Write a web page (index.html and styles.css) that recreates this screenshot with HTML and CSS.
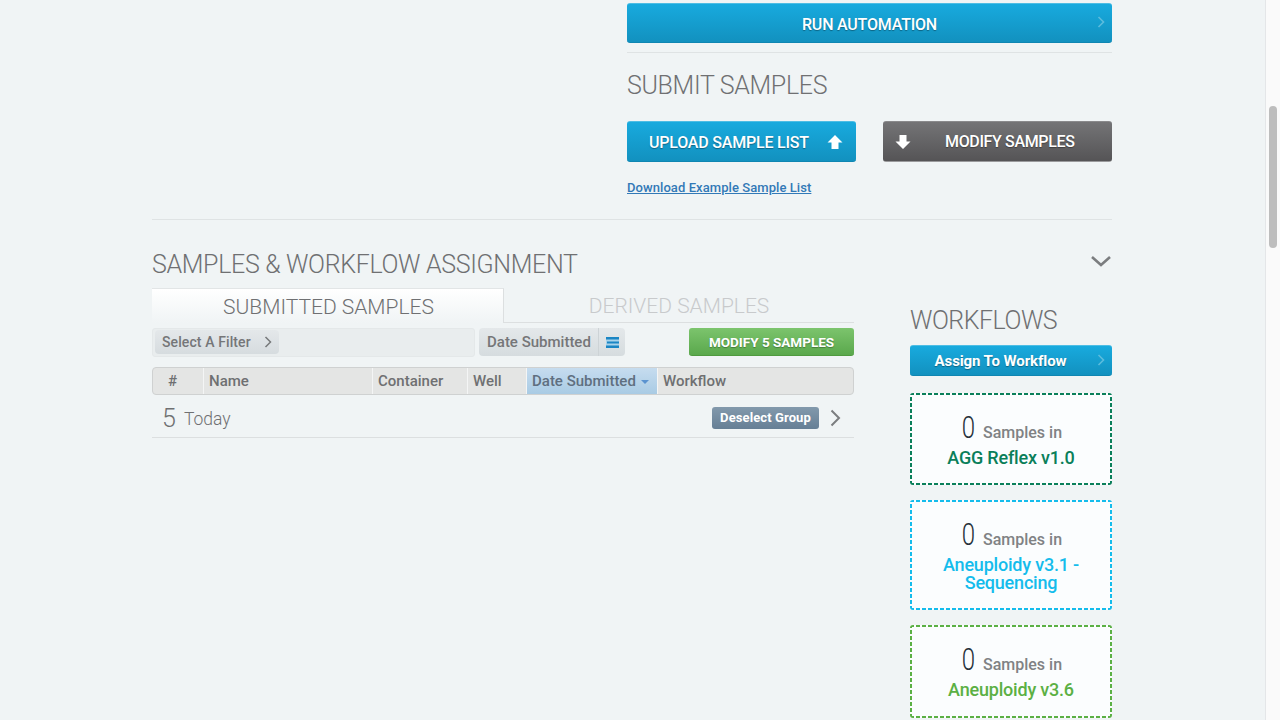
FILE: index.html
```html
<!DOCTYPE html>
<html lang="en">
<head>
  <meta charset="UTF-8">
  <title>Samples</title>
  <link rel="stylesheet" href="styles.css">
</head>
<body>
  <div class="page">
    <div class="content">
      <div class="submit-col">
        <a class="btn btn-blue btn-run">RUN AUTOMATION
          <svg class="btn-chev" width="8" height="12" viewBox="0 0 8 12"><path d="M1.5 1l5 5-5 5" fill="none" stroke="#5cbcdd" stroke-width="1.6"/></svg>
        </a>
        <hr class="rule rule-run">
        <h2 class="heading heading-submit">SUBMIT SAMPLES</h2>
        <div class="submit-btns">
          <a class="btn btn-blue btn-upload">UPLOAD SAMPLE LIST
            <svg class="arrow" width="16" height="16" viewBox="0 0 16 16"><path d="M8 1l7.500 7.500h-4v6.500h-7v-6.500h-4z" fill="#fff"/></svg>
          </a>
          <a class="btn btn-dark btn-modify">
            <svg class="arrow" width="16" height="16" viewBox="0 0 16 16"><path d="M8 15l7.500-7.500h-4v-6.500h-7v6.500h-4z" fill="#fff"/></svg>
            <span>MODIFY SAMPLES</span>
          </a>
        </div>
        <a class="download" href="#">Download Example Sample List</a>
      </div>
      <hr class="rule rule-section">

      <div class="section-head">
        <h2 class="heading">SAMPLES &amp; WORKFLOW ASSIGNMENT</h2>
        <svg width="22" height="13" viewBox="0 0 22 13"><path d="M2 2l9 8 9-8" fill="none" stroke="#7b7d7f" stroke-width="2.600"/></svg>
      </div>

      <div class="columns">
        <div class="samples">
          <div class="tabs">
            <div class="tab tab-active">SUBMITTED SAMPLES</div>
            <div class="tab tab-off">DERIVED SAMPLES</div>
          </div>
          <div class="toolbar">
            <div class="filter-bar">
              <div class="pill pill-filter">Select A Filter
                <svg width="8" height="12" viewBox="0 0 8 12"><path d="M1.500 1l5 5-5 5" fill="none" stroke="#77797b" stroke-width="1.500"/></svg>
              </div>
            </div>
            <div class="pill pill-sort">
              <span class="sort-name">Date Submitted</span>
              <span class="sort-icon">
                <svg width="13" height="11" viewBox="0 0 13 11">
                  <rect width="13" height="11" fill="#a9d3ea"/>
                  <path d="M0 0h13v2.500h-13zM1 4.500h12v2h-12zM0 8.500h13v2.500h-13z" fill="#1b86c4"/>
                </svg>
              </span>
            </div>
            <a class="btn-green">MODIFY 5 SAMPLES</a>
          </div>
          <div class="table-head">
            <div class="col col-num">#</div>
            <div class="col col-name">Name</div>
            <div class="col col-container">Container</div>
            <div class="col col-well">Well</div>
            <div class="col col-date">Date Submitted <i class="caret"></i></div>
            <div class="col col-flow">Workflow</div>
          </div>
          <div class="group-row">
            <span class="group-count">5</span>
            <span class="group-name">Today</span>
            <a class="btn-deselect">Deselect Group</a>
            <svg width="11" height="18" viewBox="0 0 11 18"><path d="M1.500 1.500l7.500 7.500-7.500 7.500" fill="none" stroke="#7b7d7f" stroke-width="2"/></svg>
          </div>
        </div>

        <div class="workflows">
          <h2 class="heading heading-flows">WORKFLOWS</h2>
          <a class="btn btn-blue btn-assign">Assign To Workflow
            <svg class="btn-chev" width="8" height="12" viewBox="0 0 8 12"><path d="M1.500 1l5 5-5 5" fill="none" stroke="#5cbcdd" stroke-width="1.600"/></svg>
          </a>
          <div class="flow-card flow-agg">
            <div class="flow-count"><b>0</b> Samples in</div>
            <div class="flow-name">AGG Reflex v1.0</div>
          </div>
          <div class="flow-card flow-seq">
            <div class="flow-count"><b>0</b> Samples in</div>
            <div class="flow-name">Aneuploidy v3.1 - Sequencing</div>
          </div>
          <div class="flow-card flow-ane">
            <div class="flow-count"><b>0</b> Samples in</div>
            <div class="flow-name">Aneuploidy v3.6</div>
          </div>
        </div>
      </div>
    </div>
    <div class="scrollbar"><div class="scroll-thumb"></div></div>
  </div>
</body>
</html>
```

FILE: styles.css
```css
html, body {
  margin: 0;
  height: 720px;
  overflow: hidden;
}

body {
  font-family: "Roboto", "Liberation Sans", sans-serif;
  background: #f0f4f5;
  color: #6f7072;
}

a {
  text-decoration: none;
}

.page {
  display: flex;
  height: 720px;
  overflow: hidden;
}

.content {
  flex: 1;
  padding: 3px 153px 0 152px;
  min-width: 0;
}

.scrollbar {
  width: 14px;
  border-left: 1px solid #e4e6e8;
  background: #fafafa;
  padding-top: 106px;
}

.scroll-thumb {
  width: 8px;
  height: 142px;
  margin-left: 3px;
  border-radius: 4px;
  background: #bdbdbd;
}

.submit-col {
  margin-left: 475px;
  width: 485px;
}

.heading {
  margin: 0;
  font-size: 25px;
  line-height: 32px;
  font-weight: 300;
  color: #6f7072;
  letter-spacing: -0.33px;
}

.btn {
  display: flex;
  align-items: center;
  justify-content: center;
  box-sizing: border-box;
  padding-top: 1px;
  color: #fff;
  border-radius: 3px;
  font-weight: 500;
  font-size: 16px;
  letter-spacing: -0.2px;
  text-shadow: 0 1px 1px rgba(0, 0, 0, 0.35);
}

.btn-blue {
  background: linear-gradient(#18aade, #1291bf);
  border-top: 1px solid #4dbde4;
  border-bottom: 1px solid #0f86b2;
}

.btn-dark {
  background: linear-gradient(#747476, #555456);
  border-top: 1px solid #8a8a8c;
  border-bottom: 1px solid #9a9a9c;
}

.btn-run {
  position: relative;
  height: 40px;
  padding-top: 3px;
}

.btn-chev {
  position: absolute;
  right: 7px;
  top: 50%;
  margin-top: -7px;
}

.rule {
  border: 0;
  height: 1px;
  margin: 0;
  background: #dfe3e4;
}

.rule-run {
  margin-top: 9px;
}

.heading-submit {
  margin-top: 17px;
}

.submit-btns {
  display: flex;
  justify-content: space-between;
  margin-top: 19px;
}

.btn-upload,
.btn-modify {
  width: 229px;
  height: 41px;
  justify-content: flex-start;
}

.btn-upload {
  gap: 18px;
  padding-left: 22px;
}

.btn-modify {
  padding-top: 0;
  padding-left: 12px;
  letter-spacing: -0.35px;
}

.btn-modify span {
  margin-left: 34px;
}

.download {
  display: block;
  margin-top: 18px;
  font-size: 13px;
  letter-spacing: 0.07px;
  line-height: 16px;
  font-weight: 500;
  color: #3279b7;
  text-decoration: underline;
}

.rule-section {
  margin-top: 23px;
}

.section-head {
  display: flex;
  justify-content: space-between;
  align-items: flex-start;
  margin-top: 29px;
}

.section-head svg {
  margin-top: 6px;
}

.columns {
  display: flex;
  justify-content: space-between;
  margin-top: 7px;
}

.samples {
  width: 702px;
}

.tabs {
  display: flex;
  height: 35px;
}

.tab {
  box-sizing: border-box;
  text-align: center;
  font-size: 21px;
  font-weight: 300;
  line-height: 37px;
}

.tab-active {
  width: 352px;
  padding-left: 2px;
  border-top: 1px solid #e2e5e6;
  border-right: 1px solid #dcdfe0;
  background: linear-gradient(#ffffff, #f0f4f5);
}

.tab-off {
  flex: 1;
  color: #c8cacc;
  border-bottom: 1px solid #dcdfe0;
}

.toolbar {
  display: flex;
  align-items: flex-start;
  margin-top: 5px;
}

.filter-bar {
  box-sizing: border-box;
  width: 323px;
  height: 29px;
  margin-right: 4px;
  padding: 1px 2px;
  background: #e9edee;
  border: 1px solid #e4e8e9;
  border-radius: 3px;
}

.pill {
  display: flex;
  align-items: center;
  font-weight: 500;
  color: #757678;
  background: linear-gradient(#e4e8ea, #d6dcdf);
  border-radius: 4px;
}

.pill-filter {
  width: 124px;
  height: 24px;
  box-sizing: border-box;
  padding: 0 7px;
  justify-content: space-between;
  font-size: 14px;
  letter-spacing: 0.1px;
}

.pill-sort {
  width: 146px;
  height: 28px;
  font-size: 15px;
}

.sort-name {
  flex: 1;
  padding-left: 8px;
}

.sort-icon {
  display: flex;
  align-items: center;
  justify-content: center;
  width: 26px;
  height: 100%;
  border-left: 1px solid #cdd3d6;
}

.btn-green {
  margin-left: auto;
  width: 165px;
  height: 28px;
  box-sizing: border-box;
  border-radius: 3px;
  border-bottom: 1px solid #4f9a3f;
  background: linear-gradient(#7cc46d, #5aa84c);
  color: #fff;
  font-size: 13.5px;
  font-weight: 700;
  line-height: 29px;
  text-align: center;
  text-shadow: 0 1px 1px rgba(0, 0, 0, 0.3);
}

.table-head {
  display: flex;
  box-sizing: border-box;
  height: 28px;
  margin-top: 10px;
  background: #e4e5e4;
  border: 1px solid #cfd1d1;
  border-radius: 4px;
  overflow: hidden;
  font-size: 15px;
  font-weight: 500;
}

.col {
  box-sizing: border-box;
  line-height: 27px;
  padding-left: 5px;
  border-left: 1px solid #f4f5f5;
}

.col-num {
  width: 50px;
  padding-left: 15px;
  border-left: 0;
}

.col-name {
  width: 169px;
}

.col-container {
  width: 95px;
}

.col-well {
  width: 59px;
}

.col-date {
  width: 131px;
  color: #5f6f80;
  background: linear-gradient(#c6dcef, #a9cbe4);
}

.col-flow {
  flex: 1;
}

.caret {
  display: inline-block;
  margin: 0 0 2px 1px;
  border: 4px solid transparent;
  border-top-color: #5b93d0;
  border-bottom: 0;
}

.group-row {
  display: flex;
  align-items: center;
  box-sizing: border-box;
  height: 43px;
  border-bottom: 1px solid #dcdfe0;
  padding: 3px 13px 0 10px;
}

.group-count {
  margin-top: 2px;
  font-size: 25px;
  font-weight: 300;
}

.group-name {
  margin: 2px 0 0 8px;
  flex: 1;
  font-size: 17.5px;
  font-weight: 300;
}

.btn-deselect {
  width: 107px;
  height: 22px;
  margin-right: 11px;
  border-radius: 3px;
  background: linear-gradient(#8299ac, #667f95);
  color: #fff;
  font-size: 13px;
  letter-spacing: 0.1px;
  font-weight: 700;
  line-height: 22px;
  text-align: center;
}

.workflows {
  width: 202px;
  padding-top: 17px;
}

.heading-flows {
  letter-spacing: -0.5px;
}

.btn-assign {
  position: relative;
  height: 31px;
  margin-top: 8px;
  padding-right: 21px;
  font-size: 15px;
  font-weight: 700;
  letter-spacing: -0.1px;
}

.flow-card {
  box-sizing: border-box;
  margin-top: 17px;
  padding: 18px 8px 19px;
  border-radius: 3px;
  background-color: #fbfdfe;
  background-image:
    repeating-linear-gradient(90deg, var(--dash) 0 4px, transparent 4px 6px),
    repeating-linear-gradient(90deg, var(--dash) 0 4px, transparent 4px 6px),
    repeating-linear-gradient(0deg, var(--dash) 0 4px, transparent 4px 6px),
    repeating-linear-gradient(0deg, var(--dash) 0 4px, transparent 4px 6px);
  background-size: 100% 2px, 100% 2px, 2px 100%, 2px 100%;
  background-position: top, bottom, left, right;
  background-repeat: no-repeat;
  text-align: center;
}

.flow-card + .flow-card {
  margin-top: 15px;
}

.flow-count {
  color: #808284;
  font-size: 16px;
  font-weight: 500;
  line-height: 32px;
  height: 32px;
}

.flow-count b {
  display: inline-block;
  width: 14px;
  margin-right: 5px;
  font-size: 32px;
  font-weight: 300;
  color: #26303a;
  transform: scaleX(0.75);
}

.flow-name {
  font-size: 18px;
  line-height: 18px;
  font-weight: 500;
  letter-spacing: -0.2px;
  margin-top: 6px;
}

.flow-agg {
  --dash: #0a7f5a;
  padding-bottom: 18px;
}

.flow-agg .flow-name {
  color: #0a7f5a;
}

.flow-seq {
  --dash: #14bcec;
  padding-bottom: 18px;
}

.flow-seq .flow-name {
  color: #14bcec;
}

.flow-ane {
  --dash: #5bb044;
}

.flow-ane .flow-name {
  color: #5bb044;
}
```
